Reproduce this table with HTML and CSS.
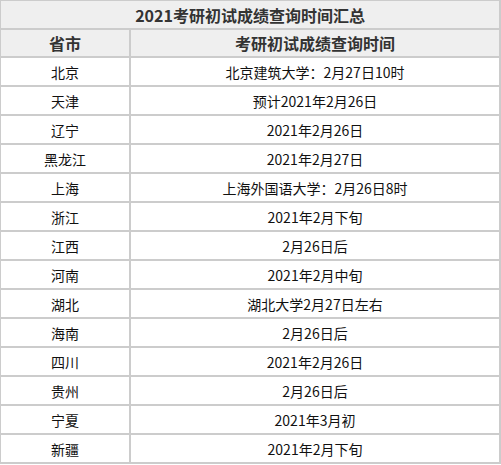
FILE: index.html
```html
<!DOCTYPE html>
<html lang="zh-CN">
<head>
<meta charset="utf-8">
<title>2021考研初试成绩查询时间汇总</title>
<link rel="stylesheet" href="styles.css">
</head>
<body>
<table class="score-table">
  <colgroup>
    <col class="col-prov">
    <col class="col-time">
  </colgroup>
  <thead>
    <tr class="title-row"><th colspan="2">2021考研初试成绩查询时间汇总</th></tr>
    <tr class="head-row"><th>省市</th><th>考研初试成绩查询时间</th></tr>
  </thead>
  <tbody>
    <tr><td>北京</td><td>北京建筑大学：2月27日10时</td></tr>
    <tr><td>天津</td><td>预计2021年2月26日</td></tr>
    <tr><td>辽宁</td><td>2021年2月26日</td></tr>
    <tr><td>黑龙江</td><td>2021年2月27日</td></tr>
    <tr><td>上海</td><td>上海外国语大学：2月26日8时</td></tr>
    <tr><td>浙江</td><td>2021年2月下旬</td></tr>
    <tr><td>江西</td><td>2月26日后</td></tr>
    <tr><td>河南</td><td>2021年2月中旬</td></tr>
    <tr><td>湖北</td><td>湖北大学2月27日左右</td></tr>
    <tr><td>海南</td><td>2月26日后</td></tr>
    <tr><td>四川</td><td>2021年2月26日</td></tr>
    <tr><td>贵州</td><td>2月26日后</td></tr>
    <tr><td>宁夏</td><td>2021年3月初</td></tr>
    <tr><td>新疆</td><td>2021年2月下旬</td></tr>
  </tbody>
</table>
</body>
</html>
```
FILE: styles.css
```css
html, body {
  margin: 0;
  padding: 0;
  background: #ffffff;
}
body {
  font-family: "Microsoft YaHei", "Noto Sans CJK SC", "Noto Sans", sans-serif;
  color: #111111;
}
.score-table {
  width: 501px;
  table-layout: fixed;
  border-collapse: separate;
  border-spacing: 0;
  border-left: 1px solid #cccccc;
  border-top: 1px solid #cccccc;
}
.col-prov { width: 130px; }
.col-time { width: 370px; }
.score-table th,
.score-table td {
  padding: 0;
  border-right: 2px solid #cccccc;
  border-bottom: 2px solid #cccccc;
  text-align: center;
  vertical-align: middle;
  box-sizing: content-box;
}
.score-table th {
  background: #efefef;
  color: #333333;
  font-size: 16px;
  font-weight: bold;
  line-height: 20px;
}
.title-row th { height: 27px; }
.head-row th { height: 26px; }
.score-table td {
  height: 27px;
  font-size: 14px;
  line-height: 18px;
  color: #111111;
}
```
